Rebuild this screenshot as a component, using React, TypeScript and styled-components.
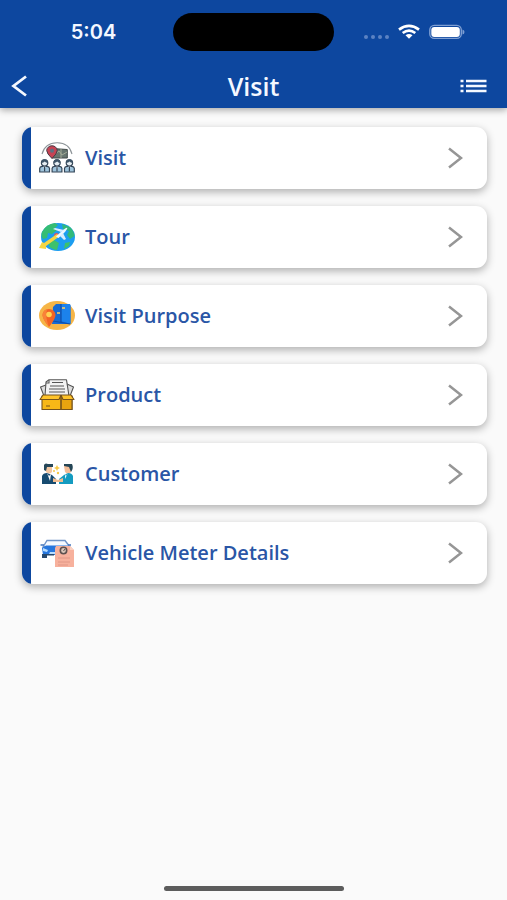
import React from "react";
import styled, { createGlobalStyle } from "styled-components";

const BLUE = "#0d479f";

const GlobalStyle = createGlobalStyle`
  *, *::before, *::after { box-sizing: border-box; }
  body { margin: 0; background: #fafafa; font-family: "Open Sans", "Noto Sans", sans-serif; }
`;

const Screen = styled.div`
  min-height: 100vh;
  display: flex;
  flex-direction: column;
  background: #fafafa;
`;

const Header = styled.header`
  background: ${BLUE};
  color: #f4f8ff;
  box-shadow: 0 2px 7px rgba(0, 0, 0, 0.35);
`;

const StatusBar = styled.div`
  height: 64px;
  display: grid;
  grid-template-columns: 1fr 161px 1fr;
  align-items: center;
`;

const Clock = styled.time`
  justify-self: center;
  padding-left: 14px;
  font-family: Inter, sans-serif;
  font-size: 20px;
  font-weight: 600;
  line-height: 24px;
`;

const Island = styled.div`
  height: 38px;
  border-radius: 19px;
  background: #000;
`;

const Indicators = styled.div`
  display: flex;
  align-items: center;
  justify-content: center;
  gap: 9px;
  padding-right: 14px;
`;

const NavBar = styled.nav`
  height: 44px;
  display: grid;
  grid-template-columns: 48px 1fr 48px;
  align-items: center;
`;

const Title = styled.h1`
  margin: 0;
  text-align: center;
  font-size: 25px;
  font-weight: 600;
  line-height: 32px;
`;

const IconButton = styled.button<{ $align: "start" | "end" }>`
  display: flex;
  justify-content: ${(p) => (p.$align === "start" ? "flex-start" : "flex-end")};
  align-items: center;
  width: 48px;
  height: 44px;
  padding: 0;
  padding-left: ${(p) => (p.$align === "start" ? "11px" : "0")};
  padding-right: ${(p) => (p.$align === "end" ? "20px" : "0")};
  border: 0;
  background: none;
  color: inherit;
  cursor: pointer;
`;

const Menu = styled.main`
  flex: 1;
  display: flex;
  flex-direction: column;
  gap: 17px;
  padding: 19px 20px 18px 22px;
`;

const Card = styled.button`
  width: 100%;
  height: 62px;
  display: flex;
  align-items: center;
  gap: 10px;
  padding: 0 24px 0 0;
  border: 0;
  border-radius: 11px;
  overflow: hidden;
  background: #fff;
  color: #2a56a6;
  box-shadow: 0 3px 9px rgba(0, 0, 0, 0.3);
  font-family: inherit;
  text-align: left;
  cursor: pointer;
`;

const Accent = styled.span`
  align-self: stretch;
  width: 9px;
  margin-right: -2px;
  background: ${BLUE};
`;

const Label = styled.span`
  flex: 1;
  font-size: 20px;
  font-weight: 600;
  line-height: 26px;
`;

const HomeArea = styled.footer`
  display: flex;
  justify-content: center;
  padding-bottom: 9px;
`;

const HomeBar = styled.div`
  width: 180px;
  height: 5px;
  border-radius: 3px;
  background: #5c5c5c;
`;

const Picture = ({ children }: { children: React.ReactNode }) => (
  <svg width="36" height="32" viewBox="0 0 36 32" aria-hidden="true">
    {children}
  </svg>
);

const Person = ({ x }: { x: number }) => (
  <g transform={`translate(${x} 17)`}>
    <path d="M0.6 13V9.4Q0.8 7.6 3 7.3H8Q10.2 7.6 10.4 9.4V13Z" fill="#9fc4dc" stroke="#344557" strokeWidth="1.2" />
    <path d="M4 7.2L5.5 10L7 7.2Z" fill="#fff" />
    <path d="M5.5 8V12.5" stroke="#344557" strokeWidth="1.2" />
    <circle cx="5.5" cy="4" r="3.2" fill="#e6eef3" stroke="#344557" strokeWidth="1.2" />
    <path d="M2.2 4Q1.7 0.2 5.5 0.2T8.8 4Q6.5 3.8 5.7 2.5Q4.5 3.8 2.2 4Z" fill="#3c5367" />
  </g>
);

const VisitIcon = () => (
  <Picture>
    <path d="M3 12Q6 1 18 0.8T33 12" fill="none" stroke="#8d9498" strokeWidth="1.1" />
    <path d="M13 6.5L28.3 7.5V16H13Z" fill="#66756f" stroke="#424b4a" />
    <path d="M16 12L20 9L23 13L28 10M22 7V16" fill="none" stroke="#a8b09b" strokeWidth="0.9" />
    <path d="M13 16.5Q7.7 11.5 7.7 8.5A5.2 4.7 0 0 1 18.2 8.5Q18.2 11.5 13 16.5Z" fill="#c64354" stroke="#493b46" />
    <circle cx="13" cy="8.7" r="2" fill="#5d7082" />
    <Person x={0.1} />
    <Person x={12.5} />
    <Person x={24.9} />
  </Picture>
);

const TourIcon = () => (
  <Picture>
    <ellipse cx="19" cy="16" rx="17" ry="14" fill="#1c9df0" />
    <path d="M3 11Q7 3 16 2L19 4L16 7L18 9L13 13L9 12L8 17L4 18Q1.5 15 3 11Z" fill="#35bd74" />
    <path d="M23 3L31 6Q35 10 35.5 15L31 18L28 14L30 10L24 8Z" fill="#31b97b" />
    <path d="M10 22L15 19L20 22L18 29Q12 28 10 25ZM26 22L31 21L30 25L25 28Z" fill="#3dc16d" />
    <circle cx="17.5" cy="14.5" r="2.5" fill="#d45b68" />
    <path d="M0 27L3 21L5 22L18 13L21 15L7 25L7 28Z" fill="#f5d644" />
    <path d="M17 15.5L24 9L27 7Q29 6 28 8L26 11L19.5 17Z" fill="#eef7ff" />
    <path d="M22 11L14 8L16 7L25 9ZM24 12L27 18L25 19L21 15Z" fill="#d9edff" />
  </Picture>
);

const PurposeIcon = () => (
  <Picture>
    <ellipse cx="18" cy="15.5" rx="18" ry="14.5" fill="#f6b547" />
    <path d="M14 7L17 4H30Q31.5 4 31.5 6V24H13Z" fill="#176bd4" />
    <path d="M22 4H30Q31.5 4 31.5 6V24L22 21Z" fill="#1c82ec" />
    <path d="M22 4V22M14 21L31 24" stroke="#0f4ea9" strokeWidth="1.2" />
    <path d="M18 13H21M23 8H26" stroke="#ffcf62" strokeWidth="1.6" />
    <path d="M10 27Q3.5 19 3.5 15A6.5 6 0 0 1 16.5 15Q16.5 19 10 27Z" fill="#f36324" />
    <path d="M10 27Q3.5 19 3.5 15Q4 10 8 9Q6 17 10 27Z" fill="#f98238" />
    <circle cx="10" cy="14.5" r="2.8" fill="#ffd253" />
  </Picture>
);

const ProductIcon = () => (
  <Picture>
    <g stroke="#565656" strokeWidth="1.1" strokeLinejoin="round">
      <path d="M7 6L1.5 8L5 17H31L34.5 8L28 5Z" fill="#dedede" />
      <path d="M6 17L7 3L10 0.8H27.5L30 17Z" fill="#f3f3f3" />
      <path d="M10 1V4H7M13 3.5H24M11 7H25M10 10H26M10 13H26" fill="none" />
    </g>
    <g stroke="#76531c" strokeWidth="1.1" strokeLinejoin="round">
      <path d="M3 17H33V30.5H3Z" fill="#f8b817" />
      <path d="M22 17H33V30.5H22Z" fill="#e9a40f" />
      <path d="M4 16H22L20 20.5H1ZM22 16H32L35 20.5H24Z" fill="#ffc42a" />
      <path d="M22 17V30M7 27H11" fill="none" />
    </g>
  </Picture>
);

const CustomerIcon = () => (
  <Picture>
    <path d="M6 8H13V14Q10 17 7 14Z" fill="#f4c7a1" />
    <path d="M5 12V7Q6 4.5 9 6H14V9H8L7 13Z" fill="#264759" />
    <path d="M3 26V18Q4 15 8 15L13 17L17 21V26Z" fill="#174b70" />
    <path d="M8 15L10 18L12 16L11 23Z" fill="#fff" />
    <path d="M25 8H32V14Q29 17 26 14Z" fill="#f4bd97" />
    <path d="M25 8V6H33Q35 10 32 14L30 9Z" fill="#254656" />
    <path d="M34 26V18Q33 15 29 15L25 17L20 21V26Z" fill="#149bc0" />
    <path d="M29 15L27 18L26 16L26 21Z" fill="#e8f9ff" />
    <path d="M14 20L19 22L24 20V24H14Z" fill="#f0bd91" />
    <g fill="#f7c948">
      <path d="M18 7L19 9L21 10L19 11L18 13L17 11L15 10L17 9Z" />
      <circle cx="19" cy="15" r="1.2" />
      <circle cx="15" cy="13" r="1" />
    </g>
  </Picture>
);

const VehicleIcon = () => (
  <Picture>
    <path d="M4 10L8 3.5H26L31 10Z" fill="#f5f9ff" stroke="#6f94c8" strokeWidth="1.4" />
    <path d="M1.5 8H5M29 8H32" stroke="#4477bd" strokeWidth="1.5" />
    <path d="M3 11L7 8.5H29L30 18H4Z" fill="#2676dd" />
    <path d="M3 17H15V18.5H8V21H3Z" fill="#26486d" />
    <path d="M4 11L9 13L8 15L4 14ZM11 15H16V17H10Z" fill="#b8ddff" />
    <path d="M17 9H31L35 13V30H16V11Z" fill="#f7b19d" />
    <path d="M31 9V13H35Z" fill="#fbd1c1" />
    <path d="M19 21H31M19 25H31M19 28H29" stroke="#dc9484" strokeWidth="0.9" />
    <circle cx="24.5" cy="13.5" r="3.2" fill="#d9c5b9" stroke="#5d5150" strokeWidth="1.6" />
    <path d="M24.5 14L26 12" stroke="#5d5150" />
  </Picture>
);

const items = [
  { label: "Visit", Icon: VisitIcon },
  { label: "Tour", Icon: TourIcon },
  { label: "Visit Purpose", Icon: PurposeIcon },
  { label: "Product", Icon: ProductIcon },
  { label: "Customer", Icon: CustomerIcon },
  { label: "Vehicle Meter Details", Icon: VehicleIcon },
];

const SignalDots = () => (
  <svg width="26" height="18" viewBox="0 0 26 18" fill="#5b82c3" aria-hidden="true">
    <circle cx="3" cy="14" r="2" />
    <circle cx="10" cy="14" r="2" />
    <circle cx="17" cy="14" r="2" />
    <circle cx="24" cy="14" r="2" />
  </svg>
);

const Wifi = () => (
  <svg width="22" height="16" viewBox="0 0 22 16" fill="none" stroke="#fff" strokeWidth="2.7" aria-hidden="true">
    <path d="M1 5.6Q11 -2 21 5.6" />
    <path d="M4.7 9Q11 4.3 17.3 9" />
    <path d="M7.5 11.3Q11 8.8 14.5 11.3L11 14.8Z" fill="#fff" stroke="none" />
  </svg>
);

const Battery = () => (
  <svg width="36" height="16" viewBox="0 0 36 16" aria-hidden="true">
    <rect x="0.8" y="1.4" width="31.5" height="13" rx="4.5" fill="none" stroke="#7f9fd2" strokeWidth="1.4" />
    <rect x="2.3" y="2.9" width="28.5" height="10" rx="3" fill="#fff" />
    <path d="M33.5 5.5Q35.5 6 35.5 8T33.5 10.5Z" fill="#7f9fd2" />
  </svg>
);

export default function App() {
  return (
    <>
      <GlobalStyle />
      <Screen>
        <Header>
          <StatusBar>
            <Clock>5:04</Clock>
            <Island />
            <Indicators>
              <SignalDots />
              <Wifi />
              <Battery />
            </Indicators>
          </StatusBar>
          <NavBar>
            <IconButton $align="start" aria-label="Back">
              <svg width="17" height="22" viewBox="0 0 17 22" fill="none" stroke="currentColor" strokeWidth="2.8">
                <path d="M15 1.5L2.5 11L15 20.5" />
              </svg>
            </IconButton>
            <Title>Visit</Title>
            <IconButton $align="end" aria-label="List">
              <svg width="27" height="14" viewBox="0 0 27 14" stroke="currentColor" strokeWidth="2.4">
                <path d="M0.5 2H3.5M6 2H26.5M0.5 7H3.5M6 7H26.5M0.5 12H3.5M6 12H26.5" />
              </svg>
            </IconButton>
          </NavBar>
        </Header>
        <Menu>
          {items.map(({ label, Icon }) => (
            <Card key={label}>
              <Accent />
              <Icon />
              <Label>{label}</Label>
              <svg width="16" height="22" viewBox="0 0 16 22" fill="none" stroke="#969696" strokeWidth="2.5" aria-hidden="true">
                <path d="M2 1.5L14 11L2 20.5" />
              </svg>
            </Card>
          ))}
        </Menu>
        <HomeArea>
          <HomeBar />
        </HomeArea>
      </Screen>
    </>
  );
}
